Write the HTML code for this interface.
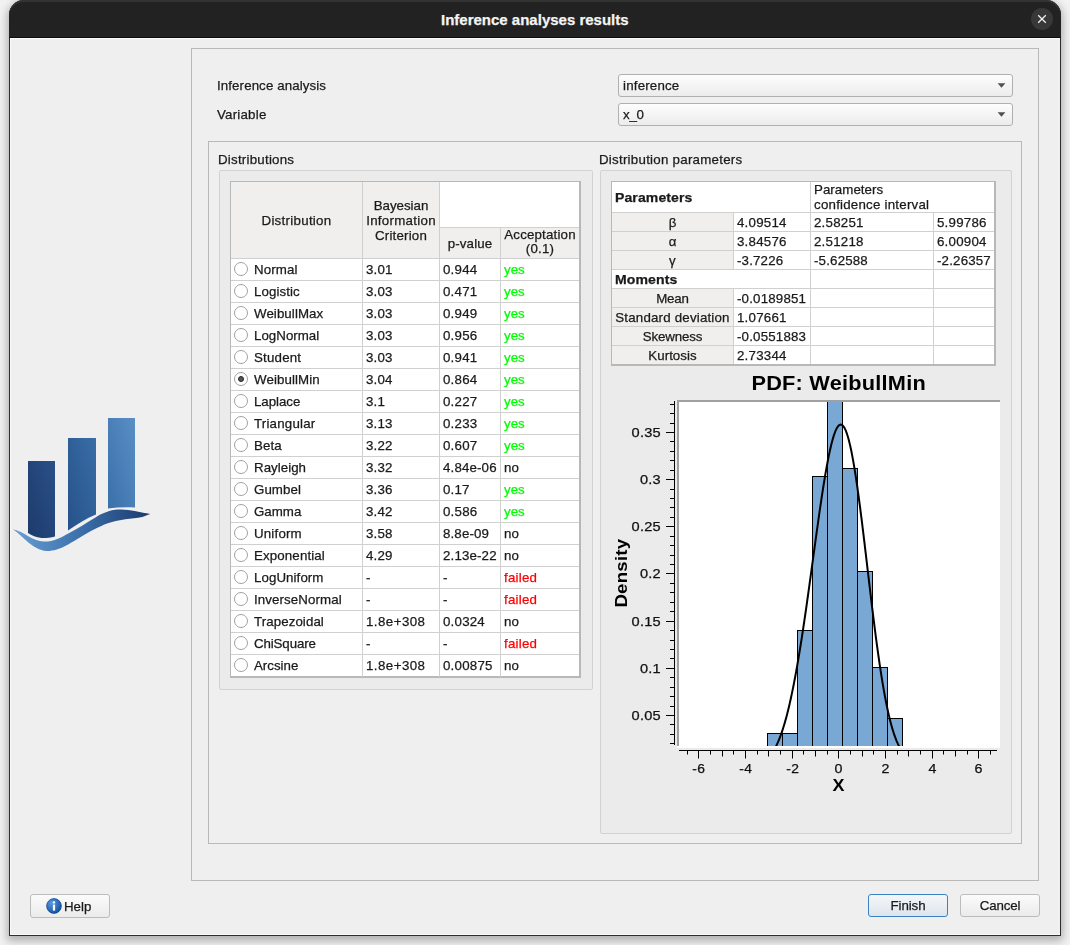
<!DOCTYPE html><html><head><meta charset="utf-8"><style>
*{box-sizing:border-box;margin:0;padding:0}
html,body{width:1070px;height:945px;overflow:hidden;background:#f2f2f2;font-family:"Liberation Sans", sans-serif;font-size:13.3px;letter-spacing:0.2px;color:#1a1a1a}
.a{position:absolute}
.t{position:absolute;white-space:pre;line-height:15px;-webkit-text-stroke:0.25px currentColor}
.win{position:absolute;left:9px;top:0;width:1052px;height:936px;background:#efefef;border:1px solid #2e2e2e;border-top:none;border-radius:15px 15px 0 0;box-shadow:0 3px 9px 2px rgba(0,0,0,0.28)}
.tb{position:absolute;left:-1px;top:0;width:1052px;height:38px;background:#222;border-bottom:1px solid #0d0d0d;border-radius:15px 15px 0 0;box-shadow:inset 0 2px 0 #333}
.box{position:absolute;border:1px solid #b9b9b9}
.frm{position:absolute;border:1px solid #d2d2d2;background:#ebebeb;border-radius:2px}
.combo{position:absolute;border:1px solid #b0b0b0;border-radius:3px;background:linear-gradient(#fdfdfd,#ececec)}
.btn{position:absolute;border:1px solid #bcbcbc;border-radius:3px;background:linear-gradient(#fbfbfb,#ebebeb);text-align:center;line-height:21px;-webkit-text-stroke:0.25px #1a1a1a}
.cell{position:absolute;white-space:pre;line-height:15px}
</style></head><body>
<div class="win"><div class="tb"></div></div>
<div class="a" style="left:10px;top:38px;width:1px;height:897px;background:#fafafa"></div>
<div class="a" style="left:10px;top:38px;width:1050px;height:1px;background:#fafafa"></div>
<div class="a" style="left:10px;top:934px;width:1050px;height:1px;background:#fafafa"></div>
<div class="t" style="left:441px;top:11px;color:#f4f4f4;font-weight:bold;font-size:15px;letter-spacing:0;line-height:18px">Inference analyses results</div>
<div class="a" style="left:1031px;top:8px;width:22px;height:22px;border-radius:50%;background:#383838"></div>
<svg class="a" style="left:1031px;top:8px" width="22" height="22"><path d="M7.2 7.2L14.8 14.8M14.8 7.2L7.2 14.8" stroke="#f0f0f0" stroke-width="1.3"/></svg>
<div class="a" style="left:0;top:0;width:1070px;height:945px;will-change:transform">
<svg class="a" style="left:0;top:400px" width="170" height="170" viewBox="0 0 170 170">
<defs>
<linearGradient id="lg1" x1="0" y1="1" x2="1" y2="0"><stop offset="0" stop-color="#1d3a6c"/><stop offset="1" stop-color="#2a5088"/></linearGradient>
<linearGradient id="lg2" x1="0" y1="1" x2="1" y2="0"><stop offset="0" stop-color="#26518a"/><stop offset="1" stop-color="#3a6ea6"/></linearGradient>
<linearGradient id="lg3" x1="0" y1="1" x2="1" y2="0"><stop offset="0" stop-color="#3a70ab"/><stop offset="1" stop-color="#5a8fc4"/></linearGradient>
<linearGradient id="lgw" x1="0" y1="0" x2="1" y2="0"><stop offset="0" stop-color="#6a9fd4"/><stop offset="0.5" stop-color="#3a6faa"/><stop offset="1" stop-color="#1c3a6c"/></linearGradient>
</defs>
<path d="M28 61 H55 V136.4 C50 137.6 45 138.2 41.4 137.9 C36 137.4 32 135.6 28 133 Z" fill="url(#lg1)"/>
<path d="M68 38 H96 V114.6 C86 118.5 77 124.5 68 130.5 Z" fill="url(#lg2)"/>
<path d="M108 18 H135 V107.6 C126 106.8 117 107.4 108 108.6 Z" fill="url(#lg3)"/>
<path d="M12.6 129.1 C14.0 129.6 18.5 131.1 21.2 132.3 C23.9 133.5 26.2 135.1 28.7 136.4 C31.2 137.7 33.7 139.2 36.2 140.1 C38.7 141.0 41.1 141.5 43.6 141.6 C46.1 141.7 48.6 141.4 51.1 140.9 C53.6 140.4 55.7 139.8 58.6 138.6 C61.5 137.4 65.2 135.3 68.3 133.6 C71.4 131.9 74.3 130.1 77.3 128.4 C80.2 126.7 83.0 125.0 86.0 123.2 C89.0 121.4 92.8 119.0 95.5 117.4 C98.2 115.8 99.8 114.8 102.0 113.8 C104.2 112.8 106.4 111.9 108.6 111.2 C110.8 110.5 112.9 110.1 115.0 109.8 C117.1 109.5 118.8 109.4 121.0 109.4 C123.2 109.4 125.7 109.6 128.0 109.9 C130.3 110.2 132.5 110.7 134.8 111.1 C137.1 111.5 139.4 112.0 142.0 112.5 C144.6 113.0 149.0 113.8 150.4 114.1 C149.0 114.6 144.9 116.2 142.2 116.9 C139.5 117.6 136.8 117.8 134.0 118.2 C131.2 118.6 128.2 118.9 125.4 119.3 C122.6 119.7 119.8 120.2 117.0 120.8 C114.2 121.4 111.6 122.0 108.6 123.0 C105.6 124.0 102.1 125.6 99.0 127.0 C95.9 128.4 92.9 129.9 90.0 131.5 C87.1 133.1 84.2 134.8 81.5 136.4 C78.8 138.0 76.8 139.4 73.6 141.2 C70.4 143.0 65.9 145.8 62.3 147.4 C58.7 149.0 54.6 150.0 51.9 150.6 C49.2 151.2 47.9 151.2 45.9 151.0 C43.9 150.8 42.1 150.4 39.9 149.5 C37.6 148.6 34.9 147.1 32.4 145.4 C29.9 143.7 27.5 141.5 25.0 139.4 C22.5 137.3 19.6 134.4 17.5 132.7 C15.4 131.0 13.4 129.7 12.6 129.1 Z" fill="url(#lgw)"/>
</svg>
<div class="box" style="left:191px;top:48px;width:848px;height:833px"></div>
<div class="t" style="left:217px;top:78px"><span style="letter-spacing:0.104px">Inference analysis</span></div>
<div class="t" style="left:217px;top:107px"><span style="letter-spacing:0.213px">Variable</span></div>
<div class="combo" style="left:618px;top:74px;width:395px;height:23px"></div>
<div class="t" style="left:623px;top:78px"><span style="letter-spacing:0.194px">inference</span></div>
<svg class="a" style="left:996px;top:82px" width="11" height="7"><path d="M1.6 1.2H9.4L5.5 5.8Z" fill="#505050"/></svg>
<div class="combo" style="left:618px;top:103px;width:395px;height:23px"></div>
<div class="t" style="left:623px;top:107px"><span style="letter-spacing:-0.239px">x_0</span></div>
<svg class="a" style="left:996px;top:111px" width="11" height="7"><path d="M1.6 1.2H9.4L5.5 5.8Z" fill="#505050"/></svg>
<div class="box" style="left:208px;top:141px;width:814px;height:703px"></div>
<div class="t" style="left:218px;top:152px"><span style="letter-spacing:0.238px">Distributions</span></div>
<div class="t" style="left:599px;top:152px"><span style="letter-spacing:0.259px">Distribution parameters</span></div>
<div class="frm" style="left:219px;top:170px;width:374px;height:520px"></div>
<div class="frm" style="left:600px;top:170px;width:412px;height:664px"></div>
<div class="a" style="left:230px;top:181px;width:351px;height:497px;background:#fff;border:1px solid #b8b8b8;border-width:1px 2px 2px 1px"></div>
<div class="a" style="left:231px;top:182px;width:208px;height:76px;background:#f0efee"></div>
<div class="a" style="left:440px;top:228px;width:139px;height:30px;background:#f0efee"></div>
<div class="a" style="left:362px;top:182px;width:1px;height:495px;background:#d0d0d0"></div>
<div class="a" style="left:439px;top:182px;width:1px;height:495px;background:#d0d0d0"></div>
<div class="a" style="left:500px;top:228px;width:1px;height:449px;background:#d0d0d0"></div>
<div class="a" style="left:440px;top:227px;width:139px;height:1px;background:#d0d0d0"></div>
<div class="a" style="left:231px;top:258px;width:348px;height:1px;background:#d0d0d0"></div>
<div class="a" style="left:231px;top:280px;width:348px;height:1px;background:#d0d0d0"></div>
<div class="a" style="left:231px;top:302px;width:348px;height:1px;background:#d0d0d0"></div>
<div class="a" style="left:231px;top:324px;width:348px;height:1px;background:#d0d0d0"></div>
<div class="a" style="left:231px;top:346px;width:348px;height:1px;background:#d0d0d0"></div>
<div class="a" style="left:231px;top:368px;width:348px;height:1px;background:#d0d0d0"></div>
<div class="a" style="left:231px;top:390px;width:348px;height:1px;background:#d0d0d0"></div>
<div class="a" style="left:231px;top:412px;width:348px;height:1px;background:#d0d0d0"></div>
<div class="a" style="left:231px;top:434px;width:348px;height:1px;background:#d0d0d0"></div>
<div class="a" style="left:231px;top:456px;width:348px;height:1px;background:#d0d0d0"></div>
<div class="a" style="left:231px;top:478px;width:348px;height:1px;background:#d0d0d0"></div>
<div class="a" style="left:231px;top:500px;width:348px;height:1px;background:#d0d0d0"></div>
<div class="a" style="left:231px;top:522px;width:348px;height:1px;background:#d0d0d0"></div>
<div class="a" style="left:231px;top:544px;width:348px;height:1px;background:#d0d0d0"></div>
<div class="a" style="left:231px;top:566px;width:348px;height:1px;background:#d0d0d0"></div>
<div class="a" style="left:231px;top:588px;width:348px;height:1px;background:#d0d0d0"></div>
<div class="a" style="left:231px;top:610px;width:348px;height:1px;background:#d0d0d0"></div>
<div class="a" style="left:231px;top:632px;width:348px;height:1px;background:#d0d0d0"></div>
<div class="a" style="left:231px;top:654px;width:348px;height:1px;background:#d0d0d0"></div>
<div class="t" style="left:231px;top:213px;width:131px;text-align:center"><span style="letter-spacing:0.291px">Distribution</span></div>
<div class="t" style="left:363px;top:198px;width:76px;text-align:center"><span style="letter-spacing:-0.011px">Bayesian</span>
<span style="letter-spacing:0.286px">Information</span>
<span style="letter-spacing:0.189px">Criterion</span></div>
<div class="t" style="left:440px;top:236px;width:60px;text-align:center"><span style="letter-spacing:0.157px">p-value</span></div>
<div class="t" style="left:501px;top:228px;width:78px;text-align:center;line-height:14px"><span style="letter-spacing:0.179px">Acceptation</span>
<span style="letter-spacing:0.221px">(0.1)</span></div>
<div class="a" style="left:234px;top:262px;width:14px;height:14px;border-radius:50%;border:1px solid #a2a2a2;background:#fff"></div>
<div class="t" style="left:254px;top:262px"><span style="letter-spacing:0.128px">Normal</span></div>
<div class="t" style="left:366px;top:262px"><span style="letter-spacing:0.207px">3.01</span></div>
<div class="t" style="left:443px;top:262px"><span style="letter-spacing:0.214px">0.944</span></div>
<div class="t" style="left:504px;top:262px;color:#00ff00"><span style="letter-spacing:0.011px">yes</span></div>
<div class="a" style="left:234px;top:284px;width:14px;height:14px;border-radius:50%;border:1px solid #a2a2a2;background:#fff"></div>
<div class="t" style="left:254px;top:284px"><span style="letter-spacing:0.097px">Logistic</span></div>
<div class="t" style="left:366px;top:284px"><span style="letter-spacing:0.207px">3.03</span></div>
<div class="t" style="left:443px;top:284px"><span style="letter-spacing:0.214px">0.471</span></div>
<div class="t" style="left:504px;top:284px;color:#00ff00"><span style="letter-spacing:0.011px">yes</span></div>
<div class="a" style="left:234px;top:306px;width:14px;height:14px;border-radius:50%;border:1px solid #a2a2a2;background:#fff"></div>
<div class="t" style="left:254px;top:306px"><span style="letter-spacing:0.080px">WeibullMax</span></div>
<div class="t" style="left:366px;top:306px"><span style="letter-spacing:0.207px">3.03</span></div>
<div class="t" style="left:443px;top:306px"><span style="letter-spacing:0.214px">0.949</span></div>
<div class="t" style="left:504px;top:306px;color:#00ff00"><span style="letter-spacing:0.011px">yes</span></div>
<div class="a" style="left:234px;top:328px;width:14px;height:14px;border-radius:50%;border:1px solid #a2a2a2;background:#fff"></div>
<div class="t" style="left:254px;top:328px"><span style="letter-spacing:0.025px">LogNormal</span></div>
<div class="t" style="left:366px;top:328px"><span style="letter-spacing:0.207px">3.03</span></div>
<div class="t" style="left:443px;top:328px"><span style="letter-spacing:0.214px">0.956</span></div>
<div class="t" style="left:504px;top:328px;color:#00ff00"><span style="letter-spacing:0.011px">yes</span></div>
<div class="a" style="left:234px;top:350px;width:14px;height:14px;border-radius:50%;border:1px solid #a2a2a2;background:#fff"></div>
<div class="t" style="left:254px;top:350px"><span style="letter-spacing:0.199px">Student</span></div>
<div class="t" style="left:366px;top:350px"><span style="letter-spacing:0.207px">3.03</span></div>
<div class="t" style="left:443px;top:350px"><span style="letter-spacing:0.214px">0.941</span></div>
<div class="t" style="left:504px;top:350px;color:#00ff00"><span style="letter-spacing:0.011px">yes</span></div>
<div class="a" style="left:234px;top:372px;width:14px;height:14px;border-radius:50%;border:1px solid #a2a2a2;background:#fff"></div>
<div class="a" style="left:238px;top:376px;width:6px;height:6px;border-radius:50%;background:#555;border:1px solid #262626"></div>
<div class="t" style="left:254px;top:372px"><span style="letter-spacing:0.097px">WeibullMin</span></div>
<div class="t" style="left:366px;top:372px"><span style="letter-spacing:0.207px">3.04</span></div>
<div class="t" style="left:443px;top:372px"><span style="letter-spacing:0.214px">0.864</span></div>
<div class="t" style="left:504px;top:372px;color:#00ff00"><span style="letter-spacing:0.011px">yes</span></div>
<div class="a" style="left:234px;top:394px;width:14px;height:14px;border-radius:50%;border:1px solid #a2a2a2;background:#fff"></div>
<div class="t" style="left:254px;top:394px"><span style="letter-spacing:-0.036px">Laplace</span></div>
<div class="t" style="left:366px;top:394px"><span style="letter-spacing:0.195px">3.1</span></div>
<div class="t" style="left:443px;top:394px"><span style="letter-spacing:0.214px">0.227</span></div>
<div class="t" style="left:504px;top:394px;color:#00ff00"><span style="letter-spacing:0.011px">yes</span></div>
<div class="a" style="left:234px;top:416px;width:14px;height:14px;border-radius:50%;border:1px solid #a2a2a2;background:#fff"></div>
<div class="t" style="left:254px;top:416px"><span style="letter-spacing:0.203px">Triangular</span></div>
<div class="t" style="left:366px;top:416px"><span style="letter-spacing:0.207px">3.13</span></div>
<div class="t" style="left:443px;top:416px"><span style="letter-spacing:0.214px">0.233</span></div>
<div class="t" style="left:504px;top:416px;color:#00ff00"><span style="letter-spacing:0.011px">yes</span></div>
<div class="a" style="left:234px;top:438px;width:14px;height:14px;border-radius:50%;border:1px solid #a2a2a2;background:#fff"></div>
<div class="t" style="left:254px;top:438px"><span style="letter-spacing:0.079px">Beta</span></div>
<div class="t" style="left:366px;top:438px"><span style="letter-spacing:0.207px">3.22</span></div>
<div class="t" style="left:443px;top:438px"><span style="letter-spacing:0.214px">0.607</span></div>
<div class="t" style="left:504px;top:438px;color:#00ff00"><span style="letter-spacing:0.011px">yes</span></div>
<div class="a" style="left:234px;top:460px;width:14px;height:14px;border-radius:50%;border:1px solid #a2a2a2;background:#fff"></div>
<div class="t" style="left:254px;top:460px"><span style="letter-spacing:0.040px">Rayleigh</span></div>
<div class="t" style="left:366px;top:460px"><span style="letter-spacing:0.207px">3.32</span></div>
<div class="t" style="left:443px;top:460px"><span style="letter-spacing:0.150px">4.84e-06</span></div>
<div class="t" style="left:504px;top:460px;color:#1a1a1a"><span style="letter-spacing:0.075px">no</span></div>
<div class="a" style="left:234px;top:482px;width:14px;height:14px;border-radius:50%;border:1px solid #a2a2a2;background:#fff"></div>
<div class="t" style="left:254px;top:482px"><span style="letter-spacing:0.061px">Gumbel</span></div>
<div class="t" style="left:366px;top:482px"><span style="letter-spacing:0.207px">3.36</span></div>
<div class="t" style="left:443px;top:482px"><span style="letter-spacing:0.207px">0.17</span></div>
<div class="t" style="left:504px;top:482px;color:#00ff00"><span style="letter-spacing:0.011px">yes</span></div>
<div class="a" style="left:234px;top:504px;width:14px;height:14px;border-radius:50%;border:1px solid #a2a2a2;background:#fff"></div>
<div class="t" style="left:254px;top:504px"><span style="letter-spacing:0.018px">Gamma</span></div>
<div class="t" style="left:366px;top:504px"><span style="letter-spacing:0.207px">3.42</span></div>
<div class="t" style="left:443px;top:504px"><span style="letter-spacing:0.214px">0.586</span></div>
<div class="t" style="left:504px;top:504px;color:#00ff00"><span style="letter-spacing:0.011px">yes</span></div>
<div class="a" style="left:234px;top:526px;width:14px;height:14px;border-radius:50%;border:1px solid #a2a2a2;background:#fff"></div>
<div class="t" style="left:254px;top:526px"><span style="letter-spacing:0.188px">Uniform</span></div>
<div class="t" style="left:366px;top:526px"><span style="letter-spacing:0.207px">3.58</span></div>
<div class="t" style="left:443px;top:526px"><span style="letter-spacing:0.137px">8.8e-09</span></div>
<div class="t" style="left:504px;top:526px;color:#1a1a1a"><span style="letter-spacing:0.075px">no</span></div>
<div class="a" style="left:234px;top:548px;width:14px;height:14px;border-radius:50%;border:1px solid #a2a2a2;background:#fff"></div>
<div class="t" style="left:254px;top:548px"><span style="letter-spacing:0.133px">Exponential</span></div>
<div class="t" style="left:366px;top:548px"><span style="letter-spacing:0.207px">4.29</span></div>
<div class="t" style="left:443px;top:548px"><span style="letter-spacing:0.150px">2.13e-22</span></div>
<div class="t" style="left:504px;top:548px;color:#1a1a1a"><span style="letter-spacing:0.075px">no</span></div>
<div class="a" style="left:234px;top:570px;width:14px;height:14px;border-radius:50%;border:1px solid #a2a2a2;background:#fff"></div>
<div class="t" style="left:254px;top:570px"><span style="letter-spacing:0.078px">LogUniform</span></div>
<div class="t" style="left:366px;top:570px"><span style="letter-spacing:-0.107px">-</span></div>
<div class="t" style="left:443px;top:570px"><span style="letter-spacing:-0.107px">-</span></div>
<div class="t" style="left:504px;top:570px;color:#ff0000"><span style="letter-spacing:0.242px">failed</span></div>
<div class="a" style="left:234px;top:592px;width:14px;height:14px;border-radius:50%;border:1px solid #a2a2a2;background:#fff"></div>
<div class="t" style="left:254px;top:592px"><span style="letter-spacing:0.104px">InverseNormal</span></div>
<div class="t" style="left:366px;top:592px"><span style="letter-spacing:-0.107px">-</span></div>
<div class="t" style="left:443px;top:592px"><span style="letter-spacing:-0.107px">-</span></div>
<div class="t" style="left:504px;top:592px;color:#ff0000"><span style="letter-spacing:0.242px">failed</span></div>
<div class="a" style="left:234px;top:614px;width:14px;height:14px;border-radius:50%;border:1px solid #a2a2a2;background:#fff"></div>
<div class="t" style="left:254px;top:614px"><span style="letter-spacing:0.083px">Trapezoidal</span></div>
<div class="t" style="left:366px;top:614px"><span style="letter-spacing:0.448px">1.8e+308</span></div>
<div class="t" style="left:443px;top:614px"><span style="letter-spacing:0.219px">0.0324</span></div>
<div class="t" style="left:504px;top:614px;color:#1a1a1a"><span style="letter-spacing:0.075px">no</span></div>
<div class="a" style="left:234px;top:636px;width:14px;height:14px;border-radius:50%;border:1px solid #a2a2a2;background:#fff"></div>
<div class="t" style="left:254px;top:636px"><span style="letter-spacing:-0.113px">ChiSquare</span></div>
<div class="t" style="left:366px;top:636px"><span style="letter-spacing:-0.107px">-</span></div>
<div class="t" style="left:443px;top:636px"><span style="letter-spacing:-0.107px">-</span></div>
<div class="t" style="left:504px;top:636px;color:#ff0000"><span style="letter-spacing:0.242px">failed</span></div>
<div class="a" style="left:234px;top:658px;width:14px;height:14px;border-radius:50%;border:1px solid #a2a2a2;background:#fff"></div>
<div class="t" style="left:254px;top:658px"><span style="letter-spacing:-0.004px">Arcsine</span></div>
<div class="t" style="left:366px;top:658px"><span style="letter-spacing:0.448px">1.8e+308</span></div>
<div class="t" style="left:443px;top:658px"><span style="letter-spacing:0.221px">0.00875</span></div>
<div class="t" style="left:504px;top:658px;color:#1a1a1a"><span style="letter-spacing:0.075px">no</span></div>
<div class="a" style="left:611px;top:181px;width:385px;height:185px;background:#fff;border:1px solid #b8b8b8;border-width:1px 2px 2px 1px"></div>
<div class="a" style="left:612px;top:213px;width:121px;height:18px;background:#f0efee"></div>
<div class="a" style="left:612px;top:232px;width:121px;height:18px;background:#f0efee"></div>
<div class="a" style="left:612px;top:251px;width:121px;height:18px;background:#f0efee"></div>
<div class="a" style="left:612px;top:289px;width:121px;height:18px;background:#f0efee"></div>
<div class="a" style="left:612px;top:308px;width:121px;height:18px;background:#f0efee"></div>
<div class="a" style="left:612px;top:327px;width:121px;height:18px;background:#f0efee"></div>
<div class="a" style="left:612px;top:346px;width:121px;height:18px;background:#f0efee"></div>
<div class="a" style="left:612px;top:212px;width:382px;height:1px;background:#d0d0d0"></div>
<div class="a" style="left:612px;top:231px;width:382px;height:1px;background:#d0d0d0"></div>
<div class="a" style="left:612px;top:250px;width:382px;height:1px;background:#d0d0d0"></div>
<div class="a" style="left:612px;top:269px;width:382px;height:1px;background:#d0d0d0"></div>
<div class="a" style="left:612px;top:288px;width:382px;height:1px;background:#d0d0d0"></div>
<div class="a" style="left:612px;top:307px;width:382px;height:1px;background:#d0d0d0"></div>
<div class="a" style="left:612px;top:326px;width:382px;height:1px;background:#d0d0d0"></div>
<div class="a" style="left:612px;top:345px;width:382px;height:1px;background:#d0d0d0"></div>
<div class="a" style="left:733px;top:212px;width:1px;height:57px;background:#d0d0d0"></div>
<div class="a" style="left:733px;top:288px;width:1px;height:76px;background:#d0d0d0"></div>
<div class="a" style="left:810px;top:182px;width:1px;height:182px;background:#d0d0d0"></div>
<div class="a" style="left:933px;top:212px;width:1px;height:152px;background:#d0d0d0"></div>
<div class="t" style="left:615px;top:190px;font-weight:bold;letter-spacing:0.1px;transform:scaleX(1.055);transform-origin:0 0">Parameters</div>
<div class="t" style="left:814px;top:182px"><span style="letter-spacing:0.049px">Parameters</span>
<span style="letter-spacing:0.230px">confidence interval</span></div>
<div class="t" style="left:612px;top:215px;width:121px;text-align:center"><span style="letter-spacing:-0.039px">β</span></div>
<div class="t" style="left:737px;top:215px"><span style="letter-spacing:0.221px">4.09514</span></div>
<div class="t" style="left:814px;top:215px"><span style="letter-spacing:0.221px">2.58251</span></div>
<div class="t" style="left:937px;top:215px"><span style="letter-spacing:0.221px">5.99786</span></div>
<div class="t" style="left:612px;top:234px;width:121px;text-align:center"><span style="letter-spacing:-0.070px">α</span></div>
<div class="t" style="left:737px;top:234px"><span style="letter-spacing:0.221px">3.84576</span></div>
<div class="t" style="left:814px;top:234px"><span style="letter-spacing:0.221px">2.51218</span></div>
<div class="t" style="left:937px;top:234px"><span style="letter-spacing:0.221px">6.00904</span></div>
<div class="t" style="left:612px;top:253px;width:121px;text-align:center"><span style="letter-spacing:0.445px">γ</span></div>
<div class="t" style="left:737px;top:253px"><span style="letter-spacing:0.173px">-3.7226</span></div>
<div class="t" style="left:814px;top:253px"><span style="letter-spacing:0.182px">-5.62588</span></div>
<div class="t" style="left:937px;top:253px"><span style="letter-spacing:0.182px">-2.26357</span></div>
<div class="t" style="left:615px;top:272px;font-weight:bold;letter-spacing:0.1px;transform:scaleX(1.057);transform-origin:0 0">Moments</div>
<div class="t" style="left:612px;top:291px;width:121px;text-align:center"><span style="letter-spacing:-0.143px">Mean</span></div>
<div class="t" style="left:737px;top:291px"><span style="letter-spacing:0.193px">-0.0189851</span></div>
<div class="t" style="left:612px;top:310px;width:121px;text-align:center"><span style="letter-spacing:0.195px">Standard deviation</span></div>
<div class="t" style="left:737px;top:310px"><span style="letter-spacing:0.221px">1.07661</span></div>
<div class="t" style="left:612px;top:329px;width:121px;text-align:center"><span style="letter-spacing:-0.169px">Skewness</span></div>
<div class="t" style="left:737px;top:329px"><span style="letter-spacing:0.193px">-0.0551883</span></div>
<div class="t" style="left:612px;top:348px;width:121px;text-align:center"><span style="letter-spacing:0.031px">Kurtosis</span></div>
<div class="t" style="left:737px;top:348px"><span style="letter-spacing:0.221px">2.73344</span></div>
<svg class="a" style="left:0;top:0" width="1070" height="945"><rect x="677" y="400" width="323" height="348" fill="#fff"/><path d="M678 746V401H1000" stroke="#a0a0a0" stroke-width="2" fill="none"/><defs><clipPath id="cv"><rect x="679" y="402" width="320" height="344"/></clipPath></defs><g clip-path="url(#cv)"><rect x="767.5" y="733.5" width="15.0" height="26.5" fill="#7aa8d4" stroke="#000" stroke-width="1"/><rect x="782.5" y="733.5" width="15.0" height="26.5" fill="#7aa8d4" stroke="#000" stroke-width="1"/><rect x="797.5" y="630.5" width="15.0" height="129.5" fill="#7aa8d4" stroke="#000" stroke-width="1"/><rect x="812.5" y="476.5" width="15.0" height="283.5" fill="#7aa8d4" stroke="#000" stroke-width="1"/><rect x="827.5" y="396.0" width="15.0" height="364.0" fill="#7aa8d4" stroke="#000" stroke-width="1"/><rect x="842.5" y="468.5" width="15.0" height="291.5" fill="#7aa8d4" stroke="#000" stroke-width="1"/><rect x="857.5" y="571.5" width="15.0" height="188.5" fill="#7aa8d4" stroke="#000" stroke-width="1"/><rect x="872.5" y="667.5" width="15.0" height="92.5" fill="#7aa8d4" stroke="#000" stroke-width="1"/><rect x="887.5" y="718.5" width="15.0" height="41.5" fill="#7aa8d4" stroke="#000" stroke-width="1"/><polyline fill="none" stroke="#000" stroke-width="2" points="764.59,760.32 765.06,760.04 765.53,759.73 765.99,759.41 766.46,759.06 766.93,758.69 767.39,758.30 767.86,757.88 768.33,757.45 768.79,756.99 769.26,756.50 769.73,755.99 770.19,755.45 770.66,754.88 771.13,754.29 771.59,753.67 772.06,753.02 772.53,752.35 772.99,751.64 773.46,750.91 773.93,750.14 774.39,749.35 774.86,748.52 775.33,747.66 775.79,746.77 776.26,745.85 776.73,744.89 777.19,743.90 777.66,742.88 778.13,741.82 778.59,740.72 779.06,739.59 779.53,738.43 779.99,737.23 780.46,735.99 780.92,734.72 781.39,733.40 781.86,732.06 782.32,730.67 782.79,729.24 783.26,727.78 783.72,726.28 784.19,724.74 784.66,723.16 785.12,721.54 785.59,719.88 786.06,718.18 786.52,716.44 786.99,714.66 787.46,712.84 787.92,710.98 788.39,709.08 788.86,707.14 789.32,705.15 789.79,703.13 790.26,701.07 790.72,698.96 791.19,696.82 791.66,694.63 792.12,692.41 792.59,690.14 793.06,687.84 793.52,685.49 793.99,683.10 794.46,680.68 794.92,678.21 795.39,675.71 795.86,673.17 796.32,670.59 796.79,667.97 797.26,665.31 797.72,662.62 798.19,659.89 798.66,657.13 799.12,654.33 799.59,651.49 800.06,648.62 800.52,645.72 800.99,642.78 801.46,639.81 801.92,636.81 802.39,633.79 802.86,630.73 803.32,627.64 803.79,624.52 804.25,621.38 804.72,618.21 805.19,615.02 805.65,611.80 806.12,608.56 806.59,605.30 807.05,602.02 807.52,598.72 807.99,595.40 808.45,592.06 808.92,588.71 809.39,585.35 809.85,581.97 810.32,578.59 810.79,575.19 811.25,571.79 811.72,568.38 812.19,564.96 812.65,561.55 813.12,558.13 813.59,554.71 814.05,551.30 814.52,547.88 814.99,544.48 815.45,541.08 815.92,537.69 816.39,534.31 816.85,530.95 817.32,527.60 817.79,524.27 818.25,520.96 818.72,517.67 819.19,514.40 819.65,511.16 820.12,507.94 820.59,504.75 821.05,501.60 821.52,498.48 821.99,495.40 822.45,492.35 822.92,489.34 823.39,486.38 823.85,483.46 824.32,480.59 824.79,477.76 825.25,474.99 825.72,472.27 826.19,469.60 826.65,467.00 827.12,464.45 827.59,461.96 828.05,459.53 828.52,457.17 828.98,454.88 829.45,452.66 829.92,450.51 830.38,448.43 830.85,446.43 831.32,444.51 831.78,442.66 832.25,440.89 832.72,439.21 833.18,437.61 833.65,436.10 834.12,434.67 834.58,433.34 835.05,432.09 835.52,430.93 835.98,429.87 836.45,428.90 836.92,428.03 837.38,427.26 837.85,426.58 838.32,426.00 838.78,425.52 839.25,425.14 839.72,424.86 840.18,424.69 840.65,424.62 841.12,424.65 841.58,424.78 842.05,425.02 842.52,425.36 842.98,425.81 843.45,426.36 843.92,427.01 844.38,427.77 844.85,428.64 845.32,429.60 845.78,430.68 846.25,431.85 846.72,433.13 847.18,434.50 847.65,435.98 848.12,437.56 848.58,439.24 849.05,441.02 849.52,442.89 849.98,444.86 850.45,446.92 850.92,449.07 851.38,451.32 851.85,453.66 852.31,456.08 852.78,458.59 853.25,461.19 853.71,463.86 854.18,466.62 854.65,469.46 855.11,472.37 855.58,475.35 856.05,478.41 856.51,481.54 856.98,484.73 857.45,487.98 857.91,491.30 858.38,494.68 858.85,498.11 859.31,501.60 859.78,505.14 860.25,508.72 860.71,512.36 861.18,516.03 861.65,519.74 862.11,523.49 862.58,527.28 863.05,531.09 863.51,534.93 863.98,538.80 864.45,542.69 864.91,546.60 865.38,550.52 865.85,554.46 866.31,558.40 866.78,562.36 867.25,566.31 867.71,570.28 868.18,574.23 868.65,578.19 869.11,582.14 869.58,586.07 870.05,590.00 870.51,593.91 870.98,597.80 871.45,601.68 871.91,605.53 872.38,609.36 872.85,613.16 873.31,616.93 873.78,620.66 874.25,624.37 874.71,628.04 875.18,631.67 875.64,635.26 876.11,638.81 876.58,642.32 877.04,645.78 877.51,649.20 877.98,652.56 878.44,655.88 878.91,659.15 879.38,662.37 879.84,665.53 880.31,668.64 880.78,671.69 881.24,674.69 881.71,677.63 882.18,680.51 882.64,683.34 883.11,686.11 883.58,688.81 884.04,691.46 884.51,694.05 884.98,696.58 885.44,699.05 885.91,701.45 886.38,703.80 886.84,706.09 887.31,708.32 887.78,710.48 888.24,712.59 888.71,714.64 889.18,716.63 889.64,718.56 890.11,720.44 890.58,722.26 891.04,724.02 891.51,725.72 891.98,727.37 892.44,728.97 892.91,730.51 893.38,732.00 893.84,733.43 894.31,734.82 894.78,736.15 895.24,737.44 895.71,738.68 896.18,739.87 896.64,741.02 897.11,742.12 897.58,743.18 898.04,744.19 898.51,745.16 898.97,746.09 899.44,746.99 899.91,747.84 900.37,748.66 900.84,749.44 901.31,750.18 901.77,750.89 902.24,751.57 902.71,752.22 903.17,752.84 903.64,753.42 904.11,753.98 904.57,754.51 905.04,755.01 905.51,755.49 905.97,755.94 906.44,756.37 906.91,756.78 907.37,757.16 907.84,757.53 908.31,757.87 908.77,758.20 909.24,758.50 909.71,758.79 910.17,759.07 910.64,759.32 911.11,759.56 911.57,759.79 912.04,760.00 912.51,760.20 912.97,760.39 913.44,760.57"/></g><path d="M674.5 401V745" stroke="#000" stroke-width="1"/><path d="M670 743.5H674.5M670 734.5H674.5M670 724.5H674.5M666 715.5H674.5M670 706.5H674.5M670 696.5H674.5M670 687.5H674.5M670 677.5H674.5M666 668.5H674.5M670 658.5H674.5M670 649.5H674.5M670 640.5H674.5M670 630.5H674.5M666 621.5H674.5M670 611.5H674.5M670 602.5H674.5M670 592.5H674.5M670 583.5H674.5M666 573.5H674.5M670 564.5H674.5M670 555.5H674.5M670 545.5H674.5M670 536.5H674.5M666 526.5H674.5M670 517.5H674.5M670 507.5H674.5M670 498.5H674.5M670 489.5H674.5M666 479.5H674.5M670 470.5H674.5M670 460.5H674.5M670 451.5H674.5M670 441.5H674.5M666 432.5H674.5M670 423.5H674.5M670 413.5H674.5M670 404.5H674.5" stroke="#000" stroke-width="1"/><text x="631.54" y="720.0" textLength="29.36" lengthAdjust="spacingAndGlyphs" font-family="Liberation Sans" font-size="12.4" fill="#111" stroke="#111" stroke-width="0.25">0.05</text><text x="639.93" y="673.0" textLength="20.97" lengthAdjust="spacingAndGlyphs" font-family="Liberation Sans" font-size="12.4" fill="#111" stroke="#111" stroke-width="0.25">0.1</text><text x="631.54" y="626.0" textLength="29.36" lengthAdjust="spacingAndGlyphs" font-family="Liberation Sans" font-size="12.4" fill="#111" stroke="#111" stroke-width="0.25">0.15</text><text x="639.93" y="578.0" textLength="20.97" lengthAdjust="spacingAndGlyphs" font-family="Liberation Sans" font-size="12.4" fill="#111" stroke="#111" stroke-width="0.25">0.2</text><text x="631.54" y="531.0" textLength="29.36" lengthAdjust="spacingAndGlyphs" font-family="Liberation Sans" font-size="12.4" fill="#111" stroke="#111" stroke-width="0.25">0.25</text><text x="639.93" y="484.0" textLength="20.97" lengthAdjust="spacingAndGlyphs" font-family="Liberation Sans" font-size="12.4" fill="#111" stroke="#111" stroke-width="0.25">0.3</text><text x="631.54" y="437.0" textLength="29.36" lengthAdjust="spacingAndGlyphs" font-family="Liberation Sans" font-size="12.4" fill="#111" stroke="#111" stroke-width="0.25">0.35</text><path d="M679 750.5H997" stroke="#000" stroke-width="1"/><path d="M687.5 750.5V754.5M698.5 750.5V758.5M710.5 750.5V754.5M722.5 750.5V756.5M733.5 750.5V754.5M745.5 750.5V758.5M757.5 750.5V754.5M768.5 750.5V756.5M780.5 750.5V754.5M792.5 750.5V758.5M803.5 750.5V754.5M815.5 750.5V756.5M827.5 750.5V754.5M838.5 750.5V758.5M850.5 750.5V754.5M862.5 750.5V756.5M873.5 750.5V754.5M885.5 750.5V758.5M897.5 750.5V754.5M908.5 750.5V756.5M920.5 750.5V754.5M932.5 750.5V758.5M943.5 750.5V754.5M955.5 750.5V756.5M967.5 750.5V754.5M978.5 750.5V758.5M990.5 750.5V754.5" stroke="#000" stroke-width="1"/><text x="692.32" y="773" textLength="12.76" lengthAdjust="spacingAndGlyphs" font-family="Liberation Sans" font-size="12.4" fill="#111" stroke="#111" stroke-width="0.25">-6</text><text x="739.32" y="773" textLength="12.76" lengthAdjust="spacingAndGlyphs" font-family="Liberation Sans" font-size="12.4" fill="#111" stroke="#111" stroke-width="0.25">-4</text><text x="786.32" y="773" textLength="12.76" lengthAdjust="spacingAndGlyphs" font-family="Liberation Sans" font-size="12.4" fill="#111" stroke="#111" stroke-width="0.25">-2</text><text x="834.63" y="773" textLength="8.14" lengthAdjust="spacingAndGlyphs" font-family="Liberation Sans" font-size="12.4" fill="#111" stroke="#111" stroke-width="0.25">0</text><text x="881.63" y="773" textLength="8.14" lengthAdjust="spacingAndGlyphs" font-family="Liberation Sans" font-size="12.4" fill="#111" stroke="#111" stroke-width="0.25">2</text><text x="928.63" y="773" textLength="8.14" lengthAdjust="spacingAndGlyphs" font-family="Liberation Sans" font-size="12.4" fill="#111" stroke="#111" stroke-width="0.25">4</text><text x="974.63" y="773" textLength="8.14" lengthAdjust="spacingAndGlyphs" font-family="Liberation Sans" font-size="12.4" fill="#111" stroke="#111" stroke-width="0.25">6</text><text x="832.4" y="791" textLength="12.2" lengthAdjust="spacingAndGlyphs" font-family="Liberation Sans" font-weight="bold" font-size="17" fill="#000">X</text><text transform="translate(626.5 573) rotate(-90)" x="-34.6" textLength="69" lengthAdjust="spacingAndGlyphs" font-family="Liberation Sans" font-weight="bold" font-size="17" fill="#000">Density</text><text x="751.4" y="390" textLength="174.6" lengthAdjust="spacingAndGlyphs" font-family="Liberation Sans" font-weight="bold" font-size="19.3" fill="#000">PDF: WeibullMin</text></svg>
<div class="btn" style="left:30px;top:894px;width:80px;height:24px"></div>
<svg class="a" style="left:46px;top:898px" width="16" height="16"><defs><radialGradient id="ig" cx="0.35" cy="0.3" r="0.8"><stop offset="0" stop-color="#5a9ae0"/><stop offset="1" stop-color="#0d4a9a"/></radialGradient></defs><circle cx="8" cy="8" r="7.4" fill="url(#ig)" stroke="#0b3f86" stroke-width="0.7"/><rect x="6.9" y="6.6" width="2.2" height="6" fill="#fff"/><circle cx="8" cy="4.4" r="1.2" fill="#fff"/></svg>
<div class="t" style="left:64px;top:899px"><span style="letter-spacing:-0.000px">Help</span></div>
<div class="btn" style="left:868px;top:894px;width:80px;height:23px;border-color:#3b82c0;background:linear-gradient(#f4f7fa,#dde5ec)"><span style="letter-spacing:-0.075px">Finish</span></div>
<div class="btn" style="left:960px;top:894px;width:80px;height:23px"><span style="letter-spacing:-0.123px">Cancel</span></div>
</div></body></html>
